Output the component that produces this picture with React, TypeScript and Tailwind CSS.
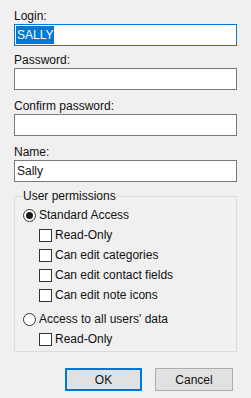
import React from 'react';

function Field({ label, value, focused, top }: { label: string; value?: string; focused?: boolean; top: string }) {
  return (
    <div className={top}>
      <div className="leading-[15px]">{label}</div>
      <div
        className={`h-[22px] bg-white border flex items-center px-[1px] ${
          focused ? 'border-[#0078d7]' : 'border-[#7a7a7a]'
        }`}
      >
        {focused ? (
          <span className="bg-[#0078d7] text-white leading-[18px] px-[1px]">{value}</span>
        ) : (
          <span className="px-[1px] leading-[18px]">{value}</span>
        )}
      </div>
    </div>
  );
}

function Check({ label }: { label: string }) {
  return (
    <div className="flex items-center h-[20px] pl-[24px]">
      <span className="w-[13px] h-[13px] border border-[#333] bg-white shrink-0" />
      <span className="ml-[3px]">{label}</span>
    </div>
  );
}

function Radio({ label, checked }: { label: string; checked?: boolean }) {
  return (
    <div className="flex items-center h-[20px] pl-[8px]">
      <span className="w-[13px] h-[13px] rounded-full border border-[#333] bg-white flex items-center justify-center shrink-0">
        {checked && <span className="w-[7px] h-[7px] rounded-full bg-[#1a1a1a]" />}
      </span>
      <span className="ml-[3px]">{label}</span>
    </div>
  );
}

export default function App() {
  return (
    <div
      className="w-[251px] h-[398px] bg-[#f0f0f0] text-[#111] text-[12px] px-[14px] pt-[9px] overflow-hidden"
      style={{ fontFamily: '"Liberation Sans", Arial, sans-serif' }}
    >
      <Field label="Login:" value="SALLY" focused top="" />
      <Field label="Password:" top="mt-[7px]" />
      <Field label="Confirm password:" top="mt-[9px]" />
      <Field label="Name:" value="Sally" top="mt-[9px]" />

      <fieldset className="mt-[7px] border border-[#dcdcdc] h-[163px] pb-[6px]">
        <legend className="ml-[7px] px-[1px] leading-[15px]">User permissions</legend>
        <div className="pt-[1px]">
          <Radio label="Standard Access" checked />
          <Check label="Read-Only" />
          <Check label="Can edit categories" />
          <Check label="Can edit contact fields" />
          <Check label="Can edit note icons" />
          <div className="h-[4px]" />
          <Radio label="Access to all users' data" />
          <Check label="Read-Only" />
        </div>
      </fieldset>

      <div className="flex justify-end gap-[13px] mt-[16px] pr-[4px]">
        <button className="w-[77px] h-[23px] bg-[#e1e1e1] border-2 border-[#0078d7]">OK</button>
        <button className="w-[78px] h-[23px] bg-[#e1e1e1] border border-[#adadad]">Cancel</button>
      </div>
    </div>
  );
}
